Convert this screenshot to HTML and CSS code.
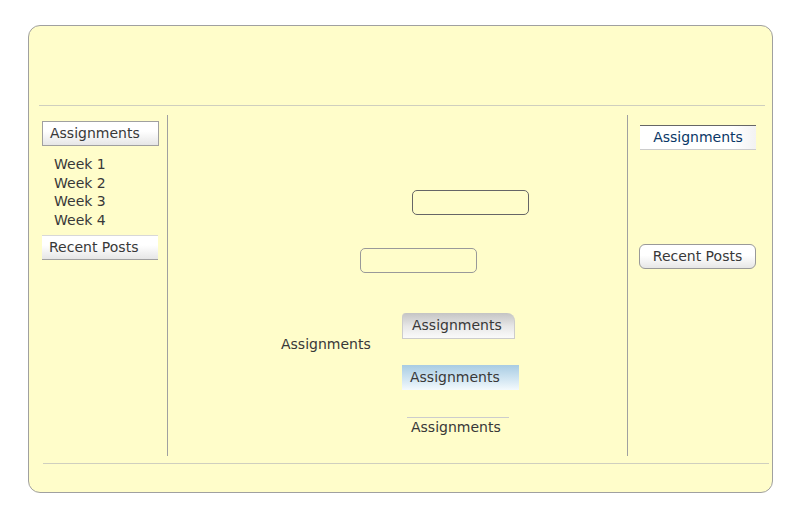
FILE: index.html
```html
<!DOCTYPE html>
<html>
<head>
<meta charset="utf-8">
<link rel="stylesheet" href="styles.css">
</head>
<body>
<div class="page">
  <div class="header"></div>
  <div class="main">
    <div class="left">
      <div class="box-left">Assignments</div>
      <ul class="weeks">
        <li>Week 1</li>
        <li>Week 2</li>
        <li>Week 3</li>
        <li>Week 4</li>
      </ul>
      <div class="box-recent">Recent Posts</div>
    </div>
    <div class="center">
      <div class="round-dark"></div>
      <div class="round-light"></div>
      <div class="demo">
        <div class="plain-label">Assignments</div>
        <div class="stack">
          <div class="tab">Assignments</div>
          <div class="blue">Assignments</div>
          <div class="topline">Assignments</div>
        </div>
      </div>
    </div>
    <div class="right">
      <div class="box-right">Assignments</div>
      <div class="btn-right">Recent Posts</div>
    </div>
  </div>
  <div class="footer"></div>
</div>
</body>
</html>
```

FILE: styles.css
```css
* { box-sizing: border-box; }
html, body { margin: 0; padding: 0; background: #fff; }
body {
  font-family: "DejaVu Sans", Verdana, sans-serif;
  font-size: 14px;
  color: #383838;
}
.page {
  margin: 25px 0 0 28px;
  width: 745px;
  height: 468px;
  border: 1px solid #a0a0a0;
  border-radius: 12px;
  background: #fffdca;
}
.header {
  height: 80px;
  margin: 0 7px 0 10px;
  border-bottom: 1px solid #cfcfbf;
}
.main {
  display: flex;
  margin-top: 9px;
  height: 341px;
}
.left {
  width: 139px;
  border-right: 1px solid #a0a0a0;
  padding-left: 13px;
  padding-top: 6px;
}
.box-left {
  width: 117px;
  height: 25px;
  border: 1px solid #a0a0a0;
  background: linear-gradient(#ffffff, #ffffff 40%, #e6e6e6);
  padding-left: 7px;
  line-height: 23px;
}
.weeks {
  list-style: none;
  margin: 9px 0 0 12px;
  padding: 0;
  line-height: 18.6px;
}
.box-recent {
  margin-top: 6px;
  width: 116px;
  height: 25px;
  border-top: 1px solid #d8d8d8;
  border-bottom: 1px solid #a0a0a0;
  background: linear-gradient(#ffffff, #ffffff 40%, #e6e6e6);
  padding-left: 7px;
  line-height: 23px;
}
.center {
  flex: 1;
}
.round-dark {
  margin: 75px 0 0 244px;
  width: 117px;
  height: 25px;
  border: 1px solid #666;
  border-radius: 5px;
}
.round-light {
  margin: 33px 0 0 192px;
  width: 117px;
  height: 25px;
  border: 1px solid #999;
  border-radius: 5px;
}
.demo {
  display: flex;
  margin-top: 40px;
}
.plain-label {
  margin: 22px 0 0 113px;
  width: 121px;
  line-height: 18px;
  height: 18px;
}
.stack {
  display: flex;
  flex-direction: column;
  align-items: flex-start;
}
.tab {
  width: 113px;
  height: 26px;
  border: 1px solid #cccccc;
  border-top: none;
  border-radius: 4px 8px 0 0;
  background: linear-gradient(#c4c4c4, #e8e8e8 55%, #fafafa);
  padding-left: 9px;
  line-height: 24px;
}
.blue {
  margin-top: 26px;
  width: 117px;
  height: 25px;
  background: linear-gradient(#a8cce3, #d4e7f3 60%, #f4fafd);
  padding-left: 8px;
  line-height: 24px;
}
.topline {
  margin: 27px 0 0 5px;
  width: 102px;
  border-top: 1px solid #cccccc;
  padding-left: 4px;
  line-height: 18px;
}
.right {
  flex: 0 0 145px;
  border-left: 1px solid #a0a0a0;
  padding-left: 12px;
  padding-top: 10px;
}
.box-right {
  width: 116px;
  height: 25px;
  border-top: 1px solid #666;
  border-bottom: 1px solid #cccccc;
  background: linear-gradient(90deg, #ffffff 80%, #f2f2f2);
  color: #0a3766;
  text-align: center;
  line-height: 23px;
}
.btn-right {
  margin: 94px 0 0 -1px;
  width: 117px;
  height: 25px;
  border: 1px solid #999;
  border-radius: 6px;
  background: linear-gradient(#ffffff, #ffffff 45%, #e6e6e6);
  text-align: center;
  line-height: 23px;
}
.footer {
  margin: 7px 3px 0 14px;
  border-top: 1px solid #cfcfbf;
}
```
